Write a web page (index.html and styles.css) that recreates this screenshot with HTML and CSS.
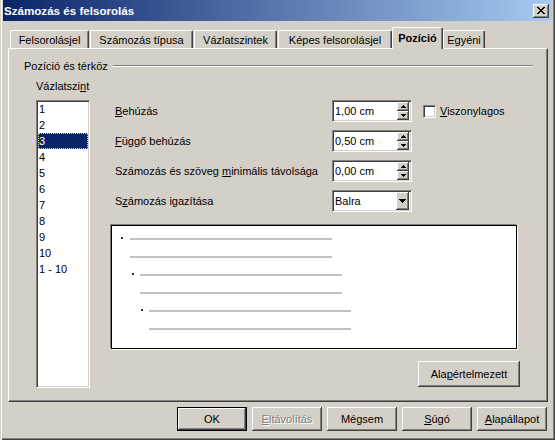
FILE: index.html
```html
<!DOCTYPE html>
<html lang="hu">
<head>
<meta charset="utf-8">
<title>Számozás és felsorolás</title>
<link rel="stylesheet" href="styles.css">
</head>
<body>
<div class="window">
  <div class="titlebar">
    <span class="title">Számozás és felsorolás</span>
    <button class="close-btn" aria-label="Bezárás">
      <svg width="8" height="7" viewBox="0 0 8 7" shape-rendering="crispEdges"><path fill="#000" d="M0 0h2v1H0z M6 0h2v1H6z M1 1h2v1H1z M5 1h2v1H5z M2 2h4v1H2z M3 3h2v1H3z M2 4h4v1H2z M1 5h2v1H1z M5 5h2v1H5z M0 6h2v1H0z M6 6h2v1H6z"/></svg>
    </button>
  </div>
  <div class="dialog-body">
    <div class="tabs">
      <div class="tab tab-bullets">Felsorolásjel</div>
      <div class="tab tab-numbering">Számozás típusa</div>
      <div class="tab tab-outline">Vázlatszintek</div>
      <div class="tab tab-graphics">Képes felsorolásjel</div>
      <div class="tab tab-active">Pozíció</div>
      <div class="tab tab-custom">Egyéni</div>
    </div>
    <div class="panel">
      <div class="group-head"><span>Pozíció és térköz</span><span class="etch"></span></div>
      <div class="group-body">
        <div class="levels">
          <div class="levels-label">Vázlatszi<u>n</u>t</div>
          <ul class="listbox">
            <li>1</li>
            <li>2</li>
            <li class="selected">3</li>
            <li>4</li>
            <li>5</li>
            <li>6</li>
            <li>7</li>
            <li>8</li>
            <li>9</li>
            <li>10</li>
            <li>1 - 10</li>
          </ul>
        </div>
        <div class="settings">
          <div class="form">
            <label class="form-label"><u>B</u>ehúzás</label>
            <div class="field spin">
              <span class="field-value">1,00 cm</span>
              <span class="spin-btns">
                <span class="spin-btn"><svg width="5" height="3" viewBox="0 0 5 3" shape-rendering="crispEdges"><path d="M2 0h1v1H2z M1 1h3v1H1z M0 2h5v1H0z"/></svg></span>
                <span class="spin-btn"><svg width="5" height="3" viewBox="0 0 5 3" shape-rendering="crispEdges"><path d="M0 0h5v1H0z M1 1h3v1H1z M2 2h1v1H2z"/></svg></span>
              </span>
            </div>
            <div class="extra"><span class="checkbox"></span><span><u>V</u>iszonylagos</span></div>

            <label class="form-label"><u>F</u>üggő behúzás</label>
            <div class="field spin">
              <span class="field-value">0,50 cm</span>
              <span class="spin-btns">
                <span class="spin-btn"><svg width="5" height="3" viewBox="0 0 5 3" shape-rendering="crispEdges"><path d="M2 0h1v1H2z M1 1h3v1H1z M0 2h5v1H0z"/></svg></span>
                <span class="spin-btn"><svg width="5" height="3" viewBox="0 0 5 3" shape-rendering="crispEdges"><path d="M0 0h5v1H0z M1 1h3v1H1z M2 2h1v1H2z"/></svg></span>
              </span>
            </div>
            <div></div>

            <label class="form-label">Számozás és szöveg <u>m</u>inimális távolsága</label>
            <div class="field spin">
              <span class="field-value">0,00 cm</span>
              <span class="spin-btns">
                <span class="spin-btn"><svg width="5" height="3" viewBox="0 0 5 3" shape-rendering="crispEdges"><path d="M2 0h1v1H2z M1 1h3v1H1z M0 2h5v1H0z"/></svg></span>
                <span class="spin-btn"><svg width="5" height="3" viewBox="0 0 5 3" shape-rendering="crispEdges"><path d="M0 0h5v1H0z M1 1h3v1H1z M2 2h1v1H2z"/></svg></span>
              </span>
            </div>
            <div></div>

            <label class="form-label">S<u>z</u>ámozás igazítása</label>
            <div class="field select">
              <span class="field-value">Balra</span>
              <span class="drop-btn"><svg width="7" height="4" viewBox="0 0 7 4" shape-rendering="crispEdges"><path d="M0 0h7v1H0z M1 1h5v1H1z M2 2h3v1H2z M3 3h1v1H3z"/></svg></span>
            </div>
            <div></div>
          </div>

          <div class="preview">
            <div class="pv-row l1"><span class="pv-bullet"></span><span class="pv-line"></span></div>
            <div class="pv-row l1c"><span class="pv-line"></span></div>
            <div class="pv-row l2"><span class="pv-bullet"></span><span class="pv-line"></span></div>
            <div class="pv-row l2c"><span class="pv-line"></span></div>
            <div class="pv-row l3"><span class="pv-bullet"></span><span class="pv-line"></span></div>
            <div class="pv-row l3c"><span class="pv-line"></span></div>
          </div>

          <button class="btn btn-defaults">Ala<u>p</u>értelmezett</button>
        </div>
      </div>
    </div>
    <div class="buttons">
      <button class="btn btn-dialog btn-default">OK</button>
      <button class="btn btn-dialog" disabled><u>E</u>ltávolítás</button>
      <button class="btn btn-dialog">Mégsem</button>
      <button class="btn btn-dialog"><u>S</u>úgó</button>
      <button class="btn btn-dialog"><u>A</u>lapállapot</button>
    </div>
  </div>
</div>
</body>
</html>
```

FILE: styles.css
```css
* { box-sizing: border-box; }

body {
  margin: 0;
  background: #d4d0c8;
  font: 11px "Liberation Sans", Arial, sans-serif;
  color: #000;
}

u { text-decoration: underline; text-underline-offset: 1px; }

.window {
  width: 555px;
  height: 440px;
  padding: 0 3px;
  display: flex;
  flex-direction: column;
  box-shadow: inset 1px 0 #d4d0c8, inset 2px 0 #fff, inset -1px -1px #404040, inset -2px -2px #808080;
}

.titlebar {
  flex: none;
  height: 21px;
  display: flex;
  align-items: center;
  padding: 0 3px 0 1px;
  background: linear-gradient(to right, #0a246a, #a6caf0);
  color: #fff;
  font-weight: bold;
  font-size: 11.6px;
}

.title { flex: 1; white-space: nowrap; }

.close-btn {
  width: 16px;
  height: 14px;
  padding: 0;
  border: 0;
  background: #d4d0c8;
  display: flex;
  align-items: center;
  justify-content: center;
  box-shadow: inset -1px -1px #404040, inset 1px 1px #fff, inset -2px -2px #808080;
}

.dialog-body {
  flex: 1;
  display: flex;
  flex-direction: column;
  padding: 6px 4px 0 5px;
}

/* Tabs */
.tabs {
  flex: none;
  display: flex;
  align-items: flex-end;
  height: 21px;
  padding-left: 2px;
}

.tab {
  height: 18px;
  margin-right: 1px;
  display: flex;
  align-items: center;
  justify-content: center;
  white-space: nowrap;
  border: 1px solid;
  border-bottom: 0;
  border-color: #fff #404040 #fff #fff;
  border-radius: 2px 2px 0 0;
  box-shadow: inset -1px 0 #808080;
  background: #d4d0c8;
}

.tab-bullets { width: 79px; }
.tab-numbering { width: 103px; }
.tab-outline { width: 83px; }
.tab-graphics { width: 114px; margin-right: 0; }
.tab-active {
  width: 51px;
  height: 22px;
  margin-right: 0;
  margin-bottom: -1px;
  padding-bottom: 2px;
  font-weight: bold;
  position: relative;
  z-index: 1;
}
.tab-custom { width: 42px; }

/* Panel */
.panel {
  flex: none;
  height: 354px;
  border: 1px solid;
  border-color: #fff #404040 #404040 #fff;
  box-shadow: inset -1px -1px #808080;
  padding: 10px 14px 0 15px;
}

.group-head {
  display: flex;
  align-items: center;
  height: 14px;
  white-space: nowrap;
}

.etch {
  flex: 1;
  margin-left: 5px;
  border-top: 1px solid #808080;
  border-bottom: 1px solid #fff;
}

.group-body {
  display: flex;
  margin-top: 6px;
  padding-left: 12px;
}

.levels {
  width: 54px;
  display: flex;
  flex-direction: column;
}

.levels-label {
  height: 14px;
  line-height: 14px;
  margin-bottom: 7px;
  white-space: nowrap;
}

.listbox {
  list-style: none;
  margin: 0;
  height: 288px;
  background: #fff;
  border: 1px solid;
  border-color: #808080 #fff #fff #808080;
  box-shadow: inset 1px 1px #404040, inset -1px -1px #d4d0c8;
  padding: 1px;
  color: #000;
}

.listbox li {
  height: 16px;
  line-height: 16px;
  padding-left: 1px;
  white-space: nowrap;
  color: #000;
}

.listbox li:first-child { margin-top: -1px; }

.listbox li.selected {
  background: #0a246a;
  color: #fff;
  outline: 1px dotted #e6d58a;
  outline-offset: -1px;
}

/* Settings */
.settings {
  width: 409px;
  margin-left: 21px;
  padding-top: 21px;
  display: flex;
  flex-direction: column;
}

.form {
  display: grid;
  grid-template-columns: 221px 80px auto;
  grid-auto-rows: 22px;
  row-gap: 8px;
  align-items: center;
}

.form-label {
  padding-left: 4px;
  white-space: nowrap;
}

.field {
  height: 22px;
  display: flex;
  align-items: center;
  background: #fff;
  border: 1px solid;
  border-color: #808080 #fff #fff #808080;
  box-shadow: inset 1px 1px #404040, inset -1px -1px #d4d0c8;
}

.field-value {
  flex: 1;
  padding-left: 2px;
  white-space: nowrap;
}

.spin-btns {
  width: 12px;
  height: 18px;
  margin-right: 2px;
  display: flex;
  flex-direction: column;
}

.spin-btn,
.drop-btn {
  background: #d4d0c8;
  display: flex;
  align-items: center;
  justify-content: center;
  box-shadow: inset -1px -1px #404040, inset 1px 1px #fff, inset -2px -2px #808080;
}

.spin-btn { flex: 1; }

.drop-btn {
  width: 13px;
  height: 18px;
  margin-right: 2px;
}

.extra {
  display: flex;
  align-items: center;
  margin-left: 11px;
  white-space: nowrap;
}

.checkbox {
  width: 13px;
  height: 13px;
  margin-right: 4px;
  background: #fff;
  border: 1px solid;
  border-color: #808080 #fff #fff #808080;
  box-shadow: inset 1px 1px #404040, inset -1px -1px #d4d0c8;
}

/* Preview */
.preview {
  width: 406px;
  height: 124px;
  margin-top: 13px;
  background: #fff;
  border: 1px solid #000;
  box-shadow: -1px -1px 0 #808080, 1px 1px 0 #fff;
  padding-top: 12px;
}

.pv-row {
  display: flex;
  align-items: flex-start;
  height: 2px;
  margin-bottom: 16px;
}

.pv-bullet {
  width: 2px;
  height: 2px;
  margin-top: -1px;
  background: #303030;
}

.pv-line {
  width: 202px;
  height: 2px;
  background: #c0c0c0;
}

.l1 { padding-left: 9px; }
.l1 .pv-line { margin-left: 7px; }
.l1c { padding-left: 18px; }
.l2 { padding-left: 20px; }
.l2 .pv-line { margin-left: 6px; }
.l2c { padding-left: 28px; }
.l3 { padding-left: 29px; }
.l3 .pv-line { margin-left: 6px; }
.l3c { padding-left: 37px; }

/* Buttons */
.btn {
  font-family: inherit;
  font-size: 11px;
  font-weight: normal;
  color: #000;
  background: #d4d0c8;
  border: 0;
  padding: 0;
  white-space: nowrap;
  box-shadow: inset -1px -1px #404040, inset 1px 1px #fff, inset -2px -2px #808080;
}

.btn:disabled {
  color: #808080;
  text-shadow: 1px 1px 0 #fff;
}

.btn-defaults {
  align-self: flex-end;
  width: 102px;
  height: 26px;
  margin-top: 12px;
}

.buttons {
  display: flex;
  justify-content: flex-end;
  gap: 5px;
  margin-top: 5px;
  padding-right: 1px;
}

.btn-dialog {
  width: 70px;
  height: 24px;
}

.btn-default {
  border: 1px solid #000;
}
```
